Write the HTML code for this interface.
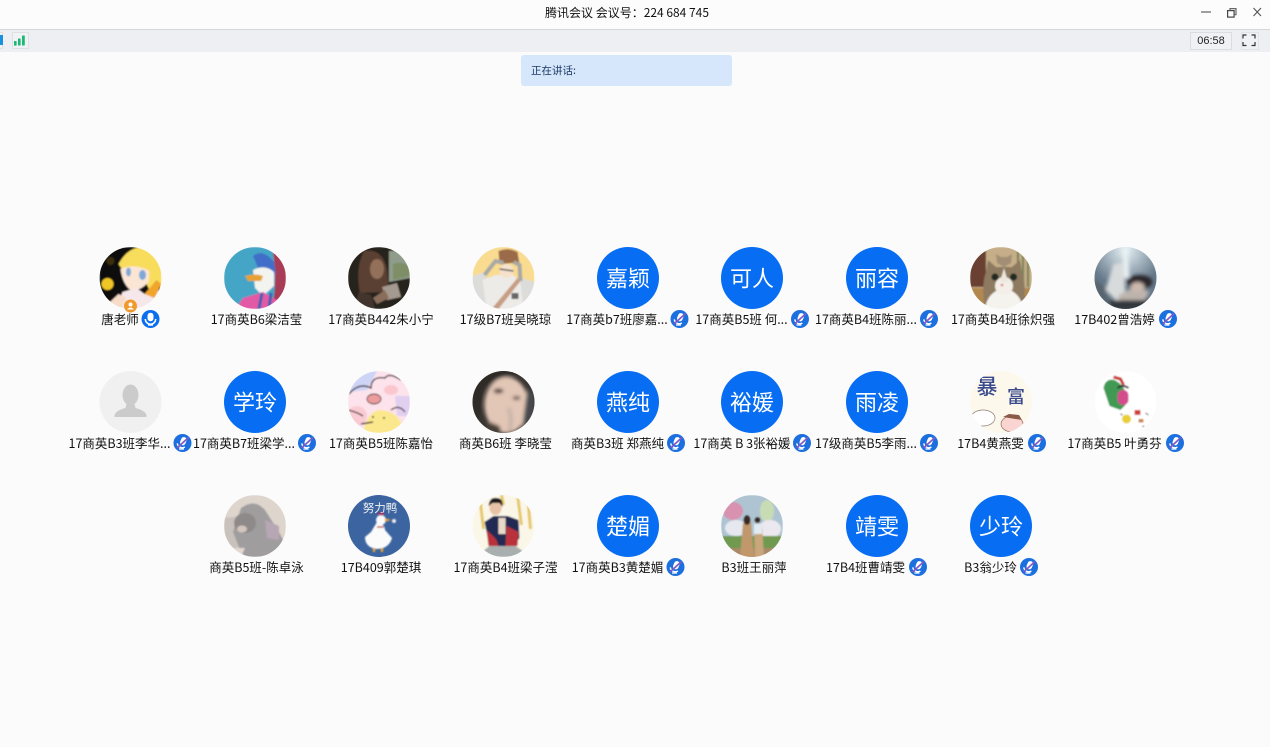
<!DOCTYPE html>
<html><head><meta charset="utf-8"><title>腾讯会议</title>
<style>
html,body{margin:0;padding:0;width:1270px;height:747px;overflow:hidden;background:#fbfbfb}
body{position:relative;font-family:"Liberation Sans","Noto Sans CJK SC",sans-serif;color:#111}
.a{position:absolute}
.n{position:absolute;white-space:nowrap;font-size:12.5px;line-height:16px;transform:translateX(-50%);color:#111;font-family:"Noto Sans CJK SC","Liberation Sans",sans-serif}
.r1{top:311px}.r2{top:435px}.r3{top:559px}
svg{position:absolute;left:0;top:0}
</style></head><body>
<div class="a" style="left:0;top:0;width:1270px;height:29px;background:#fcfcfc"></div>
<div class="a" style="left:0;top:29px;width:1270px;height:1px;background:#d6d7db"></div>
<div class="a" style="left:0;top:30px;width:1270px;height:22px;background:#eeeff3"></div>
<div class="a" style="left:545px;top:5px;white-space:nowrap;font-size:12px;line-height:16px;color:#111;font-family:'Noto Sans CJK SC','Liberation Sans',sans-serif">腾讯会议 会议号：224 684 745</div>
<div class="a" style="left:521px;top:55px;width:211px;height:31px;background:#d6e6fb;border-radius:3px"></div>
<div class="a" style="left:531px;top:63px;font-size:10.5px;line-height:15px;color:#1c3a66;font-family:'Noto Sans CJK SC',sans-serif">正在讲话:</div>
<div class="a" style="left:1190px;top:32px;width:40px;height:16px;background:#f0f1f4;border:1px solid #dcdde1;text-align:center;font-size:11px;line-height:16px;color:#222">06:58</div>
<div class="a" style="left:1241px;top:32px;width:16px;height:16px;background:#f0f1f4;border:1px solid #e2e3e7"></div>
<div class="a" style="left:12px;top:32px;width:17px;height:17px;background:#f1f2f5;border:1px solid #dfe0e4;box-sizing:border-box"></div>
<div class="a" style="left:-3px;top:32px;width:6px;height:17px;background:#f1f2f5;border:1px solid #dfe0e4;box-sizing:border-box"></div>

<svg width="1270" height="747" viewBox="0 0 1270 747" xmlns="http://www.w3.org/2000/svg">
<defs>
<clipPath id="c"><circle r="31"/></clipPath>
<filter id="b" x="-10%" y="-10%" width="120%" height="120%"><feGaussianBlur stdDeviation="0.8"/></filter>
<filter id="b2" x="-20%" y="-20%" width="140%" height="140%"><feGaussianBlur stdDeviation="1.8"/></filter>
<radialGradient id="g1" cx="50%" cy="5%" r="60%"><stop offset="0" stop-color="#e6f2f6"/><stop offset="1" stop-color="#66798a"/></radialGradient>
<symbol id="mic" viewBox="-9 -9 18 18" overflow="visible">
<circle r="9" fill="#0b6ef0"/>
<rect x="-3" y="-6.200" width="6" height="8.500" rx="3" fill="#fff"/>
<path d="M-5.200 0a5.200 5.200 0 0 0 10.400 0" fill="none" stroke="#fff" stroke-width="1.500"/>
<path d="M-2.500 6h5" stroke="#fff" stroke-width="1.400"/>
</symbol>
<symbol id="mut" viewBox="-9 -9 18 18" overflow="visible">
<circle r="9" fill="#1b6fdf"/>
<rect x="-2.700" y="-6.200" width="5.600" height="8.500" rx="2.800" fill="#fff" transform="rotate(22)"/>
<path d="M-5.200 .4a5 5 0 0 0 7.600 3.600" fill="none" stroke="#fff" stroke-width="1.400"/>
<path d="M-3.500 6h5" stroke="#fff" stroke-width="1.300"/>
<path d="M-5.500 5L6-5.500" stroke="#8258c4" stroke-width="1.700"/>
</symbol>
</defs>

<rect x="0" y="35" width="3" height="10" fill="#1b8fe0"/>
<g fill="#1db876"><rect x="14" y="41" width="2.600" height="4.600" rx=".5"/><rect x="18" y="38.500" width="2.600" height="7" rx=".5"/><rect x="22" y="35.500" width="2.800" height="10" rx=".5"/></g>
<g fill="none" stroke="#555" stroke-width="1.200">
<path d="M1201 12h10" stroke="#777" stroke-width="1.400"/>
<rect x="1227.600" y="10.600" width="6.500" height="6.500" stroke="#444"/>
<path d="M1230 10.500V8.600h6v6h-2" stroke="#666"/>
<path d="M1253.500 8l7.500 8M1261 8l-7.500 8" stroke="#555" stroke-width="1.100"/>
<path d="M1243 38.500V35h3.500M1251.500 35h3.500v3.500M1243 42v3.500h3.500M1255 42v3.500h-3.500" stroke="#333"/>
</g>

<!-- Row 1 -->
<g transform="translate(130.500 278)" clip-path="url(#c)"><g filter="url(#b)">
<rect x="-31" y="-31" width="62" height="62" fill="#0b0908"/>
<circle cx="-23" cy="6" r="6" fill="#f0c625"/><circle cx="-20" cy="-17" r="4" fill="#3a2d0a"/>
<path d="M-12-14Q-2-32 14-31 31-26 31-4V8L20 14 10-6-8-8Z" fill="#f8dd5c"/>
<path d="M-10-9Q4-15 19-7L18 4Q9 14 0 12-8 6-10-9Z" fill="#fbe6d6"/>
<ellipse cx="12" cy="-3" rx="3.500" ry="5" fill="#7fa8d6"/><ellipse cx="-2" cy="-6" rx="2.500" ry="4.500" fill="#7fa8d6"/>
<path d="M-14 31L-8 14 6 10 14 16 28 10 31 31Z" fill="#f6e7ea"/>
<path d="M14 16L26 2 31 6 24 20Z" fill="#f0a52c"/>
<path d="M-28 31L-12 16-4 20-10 31Z" fill="#f7dcc8"/>
</g></g>
<g transform="translate(255 278)" clip-path="url(#c)"><g filter="url(#b)">
<rect x="-31" y="-31" width="62" height="62" fill="#44a5c6"/>
<path d="M17-31H31V31H17Q23 0 17-31Z" fill="#a83a55"/>
<path d="M-2-22Q8-30 19-16L21-4 4-8Z" fill="#3f6ec8"/>
<path d="M-2-8Q10-14 19-6L19 8 8 18 0 10Z" fill="#f3f3f0"/>
<path d="M-10-2Q0-5 8-2L6 3-7 3Z" fill="#e7a030"/>
<path d="M-20 31L-12 20 8 14 22 22V31Z" fill="#e25aa6"/>
<path d="M4 31L7 15M14 31L16 15" stroke="#3a5fb4" stroke-width="3"/>
</g></g>
<g transform="translate(379 278)" clip-path="url(#c)"><g filter="url(#b)">
<rect x="-31" y="-31" width="62" height="62" fill="#27201d"/>
<path d="M10-27H31V0L10 4Z" fill="#8f9c8b"/>
<path d="M14-14Q24-18 31-10V-2L14 2Z" fill="#7e8f68"/>
<path d="M-15-27Q4-30 8-8L10 14-19 15Q-24-10-15-27Z" fill="#5a4130"/>
<ellipse cx="-2" cy="-9" rx="7" ry="10" fill="#93705a"/>
<path d="M3 9L18 5 22 19 8 22Z" fill="#a59a90"/>
<path d="M-6 20L6 12 10 20-2 26Z" fill="#8a6e5c"/>
<path d="M-26 31L-20 14-8 17-4 31Z" fill="#43352d"/>
</g></g>
<g transform="translate(503.500 278)" clip-path="url(#c)"><g filter="url(#b)">
<rect x="-31" y="-31" width="62" height="62" fill="#f9dc90"/>
<path d="M-31-2L-18-6-14 20 18 0 31 4V31H-31Z" fill="#dcdcda"/>
<path d="M-21 2L-8-3H10L17 5 20 31H-17Z" fill="#ecebe8"/>
<path d="M-5-27Q5-31 14-26L16-14 9-15-4-14Z" fill="#9b6b48"/>
<ellipse cx="3" cy="-7" rx="7" ry="7" fill="#f6e2cc"/>
<path d="M-19-3L-8-17 0-15M17 3L16-13 10-16" stroke="#a8a8a6" stroke-width="4" fill="none"/>
<path d="M-12 31L14 0 17 3-5 31Z" fill="#c79e84"/>
<path d="M-4-9L10-7" stroke="#555" stroke-width="1.500"/>
<rect x="8" y="15" width="7" height="6" fill="#666"/>
</g></g>
<g transform="translate(628 278)"><circle r="31" fill="#076df2"/><text y="8.500" text-anchor="middle" font-family="Noto Sans CJK SC" font-size="22" fill="#fff">嘉颖</text></g>
<g transform="translate(752 278)"><circle r="31" fill="#076df2"/><text y="8.500" text-anchor="middle" font-family="Noto Sans CJK SC" font-size="22" fill="#fff">可人</text></g>
<g transform="translate(877 278)"><circle r="31" fill="#076df2"/><text y="8.500" text-anchor="middle" font-family="Noto Sans CJK SC" font-size="22" fill="#fff">丽容</text></g>
<g transform="translate(1001 278)" clip-path="url(#c)"><g filter="url(#b)">
<rect x="-31" y="-31" width="62" height="62" fill="#c5ae88"/>
<rect x="-31" y="-31" width="16" height="40" fill="#6b3f30"/>
<path d="M17-31v40M22-31v40M27-31v40" stroke="#7c8358" stroke-width="2.200"/>
<rect x="-31" y="10" width="62" height="21" fill="#b38850"/>
<path d="M-16 31Q-20 8-15-6L-13-18-5-11H11L19-18 21-6Q26 8 22 31Z" fill="#8d7a60"/>
<path d="M-16 31Q-14 14 3 10 20 14 22 31Z" fill="#f5f3ee"/>
<path d="M-4-15L-5-24 0-21H6L11-24 10-15 3-11Z" fill="#a28e74"/>
<ellipse cx="3" cy="8" rx="9" ry="9" fill="#f3efe8"/>
<path d="M3-10L-1 4H7Z" fill="#ece7dd"/>
<circle cx="-6" cy="-1" r="3.600" fill="#222a22"/><circle cx="12.500" cy="-1" r="3.600" fill="#222a22"/>
<path d="M-1 6h4L1 9Z" fill="#e3838a"/>
</g></g>
<g transform="translate(1125.500 278)" clip-path="url(#c)">
<rect x="-31" y="-31" width="62" height="62" fill="url(#g1)"/>
<g filter="url(#b2)">
<path d="M-3-31h5L4 0H-2Z" fill="#e6f0f3"/>
<path d="M-20 12L-12-14-2-16 0 16-8 24Z" fill="#d8dbdc"/>
<path d="M-8 18L10 8 24 14 18 24-2 26Z" fill="#bdb4ad"/>
<ellipse cx="14" cy="4" rx="13" ry="7" fill="#2a282c"/>
<ellipse cx="12" cy="9" rx="7" ry="5" fill="#cbb8ad"/>
<rect x="-31" y="22" width="62" height="10" fill="#30373e"/>
<path d="M-31 0L-20 10-14 31H-31Z" fill="#59656f"/>
</g></g>

<!-- Row 2 -->
<g transform="translate(130.500 402)" clip-path="url(#c)">
<rect x="-31" y="-31" width="62" height="62" fill="#f0f0f0"/>
<ellipse cx="0" cy="-7" rx="8" ry="10.500" fill="#cbcbcb"/>
<path d="M-16 14Q-16 9-5 6L-4 2H4L5 6Q16 9 16 14V15H-16Z" fill="#cbcbcb"/>
</g>
<g transform="translate(255 402)"><circle r="31" fill="#076df2"/><text y="8.500" text-anchor="middle" font-family="Noto Sans CJK SC" font-size="22" fill="#fff">学玲</text></g>
<g transform="translate(379 402)" clip-path="url(#c)"><g filter="url(#b)">
<rect x="-31" y="-31" width="62" height="62" fill="#fde3ec"/>
<path d="M-31-31H-2L-12-12-31-10Z" fill="#cdd4f6"/>
<path d="M16-6H31V14H18Z" fill="#e1cff0"/>
<ellipse cx="-22" cy="14" rx="10" ry="10" fill="#fbcbd4"/>
<path d="M-16 31Q-12 9 1 8 22 9 25 31Z" fill="#fce88c"/>
<path d="M-30-8Q-20-20-8-14-8-26 6-24 10-30 22-22M-31 8Q-22 10-16 14M-18 22L-6 20M12 8Q20 2 26 10" fill="none" stroke="#4b3b3f" stroke-width="1.400"/>
<ellipse cx="-5" cy="-3" rx="7" ry="5" fill="#ec9c9c" stroke="#4b3b3f" stroke-width=".9"/>
<circle cx="-6" cy="15" r="1" fill="#333"/><circle cx="5" cy="16" r="1" fill="#333"/>
<ellipse cx="12" cy="-12" rx="7" ry="5" fill="#fbc6ce"/>
</g></g>
<g transform="translate(503.500 402)" clip-path="url(#c)">
<rect x="-31" y="-31" width="62" height="62" fill="#3a3532"/>
<g filter="url(#b2)">
<ellipse cx="3" cy="3" rx="22" ry="28" fill="#e2c6b6"/>
<path d="M-31-31H20L10-26Q-10-26-20-10L-24 16-31 20Z" fill="#2e2a27"/>
<path d="M24-14L31-8V31H18Z" fill="#46494e"/>
<ellipse cx="-5" cy="-11" rx="5" ry="2.500" fill="#4f3f38"/><ellipse cx="13" cy="-4" rx="4" ry="2" fill="#6a554c"/>
<path d="M5 6Q9 16 6 30" stroke="#c8b4a8" stroke-width="4" fill="none"/>
<path d="M-22 31L-14 20-4 24-2 31Z" fill="#4a3f39"/>
</g></g>
<g transform="translate(628 402)"><circle r="31" fill="#076df2"/><text y="8.500" text-anchor="middle" font-family="Noto Sans CJK SC" font-size="22" fill="#fff">燕纯</text></g>
<g transform="translate(752 402)"><circle r="31" fill="#076df2"/><text y="8.500" text-anchor="middle" font-family="Noto Sans CJK SC" font-size="22" fill="#fff">裕媛</text></g>
<g transform="translate(877 402)"><circle r="31" fill="#076df2"/><text y="8.500" text-anchor="middle" font-family="Noto Sans CJK SC" font-size="22" fill="#fff">雨凌</text></g>
<g transform="translate(1001 402)" clip-path="url(#c)">
<rect x="-31" y="-31" width="62" height="62" fill="#fdf8ec"/>
<text x="-14" y="-8" text-anchor="middle" font-family="Noto Sans CJK SC" font-weight="500" font-size="21" fill="#3a4a8c">暴</text>
<text x="15" y="1" text-anchor="middle" font-family="Noto Sans CJK SC" font-weight="500" font-size="18" fill="#3a4a8c">富</text>
<ellipse cx="-18" cy="16" rx="12" ry="8" fill="#fff" stroke="#8a7a70" stroke-width=".7"/>
<ellipse cx="11" cy="22" rx="11" ry="8" fill="#f9d4d0" stroke="#7c5a50" stroke-width=".6"/>
<path d="M2 15l6-3 10 1 3 5" fill="#8a5a48"/>
</g>
<g transform="translate(1125.500 402)" clip-path="url(#c)"><g filter="url(#b)">
<rect x="-31" y="-31" width="62" height="62" fill="#fff"/>
<path d="M-22-14Q-20-24-11-22-3-18 0-10L0 3-5 8-16 4Z" fill="#3f9a52"/>
<path d="M-12-25l7 2 3 6" stroke="#c9302c" stroke-width="3" fill="none"/>
<rect x="-8" y="-12" width="11" height="15" rx="5" fill="#d34d8c"/>
<path d="M-8-14q5-4 11 0" stroke="#333" stroke-width="2" fill="none"/>
<circle cx="1" cy="17" r="4.500" fill="#e9cf32"/>
<rect x="9" y="8" width="6" height="5" fill="#d03c34"/>
<rect x="13" y="17" width="5" height="3.500" fill="#c98442"/>
<path d="M-5 12l2 1M20 11l3 2M17 24l2 1" stroke="#333" stroke-width="1"/>
</g></g>

<!-- Row 3 -->
<g transform="translate(255 526)" clip-path="url(#c)"><g filter="url(#b)">
<rect x="-31" y="-31" width="62" height="62" fill="#ded5cd"/>
<path d="M-31-8L-14-10-8 22-31 22Z" fill="#c9c1bb"/>
<path d="M-14-18Q0-28 10-16L24 6 31 20 24 31H-12L-22 6Z" fill="#a09d9e"/>
<path d="M10-6L24 0 24 14 12 12Z" fill="#b7a6b4"/>
<ellipse cx="-10" cy="-3" rx="11" ry="10" fill="#8e8a8a"/>
<ellipse cx="-13" cy="3" rx="5" ry="3.500" fill="#d4c6be"/>
<path d="M-31 22H-10L-14 31H-31Z" fill="#e3d8d0"/>
</g></g>
<g transform="translate(379 526)" clip-path="url(#c)">
<rect x="-31" y="-31" width="62" height="62" fill="#3b64a0"/>
<text x="1" y="-14" text-anchor="middle" font-family="Noto Sans CJK SC" font-size="11.500" fill="#f3f3f3">努力鸭</text>
<g filter="url(#b)" transform="translate(0 2)">
<circle cx="2" cy="-8" r="5" fill="#fbfbfb"/>
<path d="M-2-6Q6-4 6 2L13 10Q10 21-3 21-14 19-14 9L-8 4Z" fill="#fbfbfb"/>
<path d="M6-10l6 2-6 2Z" fill="#e9a03a"/>
<path d="M-2-1h7" stroke="#c43a3a" stroke-width="1.400"/>
<path d="M-5 20v4M3 20v4" stroke="#e5a52e" stroke-width="2.500"/>
<path d="M-1-15l3 2 3-2" stroke="#d14" stroke-width="1.500" fill="none"/>
<circle cx="15" cy="-7" r="2" fill="#eee"/>
</g></g>
<g transform="translate(503.500 526)" clip-path="url(#c)"><g filter="url(#b)">
<rect x="-31" y="-31" width="62" height="62" fill="#fbf7e8"/>
<path d="M-24-31l4 34M-2-31l2 10M14-31l4 30M24-31l3 34" stroke="#e5c767" stroke-width="3"/>
<path d="M-19-4L-10-10H4L15-6 16 12 10 20H-14Z" fill="#232b52"/>
<path d="M-17 4Q-10 10-7 14L-5 20H-15ZM3 0L15 6 14 20 2 20Z" fill="#b9303a"/>
<rect x="-5" y="-8" width="7" height="16" fill="#e8d8c8"/>
<ellipse cx="-8" cy="-18" rx="6" ry="7" fill="#e8c2a6"/>
<path d="M-15-20Q-14-29-7-28 0-28-1-19L-4-23H-11Z" fill="#1a1a1a"/>
<path d="M-28 31L-14 20H12L28 31Z" fill="#a9aeae"/>
</g></g>
<g transform="translate(628 526)"><circle r="31" fill="#076df2"/><text y="8.500" text-anchor="middle" font-family="Noto Sans CJK SC" font-size="22" fill="#fff">楚媚</text></g>
<g transform="translate(752 526)" clip-path="url(#c)"><g filter="url(#b)">
<rect x="-31" y="-31" width="62" height="62" fill="#aec4d2"/>
<ellipse cx="-19" cy="-15" rx="10" ry="9" fill="#d891ae"/>
<ellipse cx="15" cy="-15" rx="7" ry="11" fill="#c8dcb4"/>
<ellipse cx="-16" cy="2" rx="11" ry="8" fill="#e6e8f0"/>
<ellipse cx="18" cy="3" rx="11" ry="9" fill="#ebe8f0"/>
<rect x="-31" y="10" width="62" height="12" fill="#6f9a50"/>
<rect x="-31" y="22" width="62" height="10" fill="#a98a68"/>
<path d="M-9-3L-1-4 2 31H-12Z" fill="#c0986c"/>
<ellipse cx="-5" cy="-6" rx="3.500" ry="5" fill="#3a2a22"/>
<path d="M2-2L10-2 12 31H3Z" fill="#c9a67c"/>
<rect x="2" y="-2" width="8" height="10" fill="#e2ebf2"/>
<circle cx="5.500" cy="-6" r="3" fill="#3a2a22"/>
</g></g>
<g transform="translate(877 526)"><circle r="31" fill="#076df2"/><text y="8.500" text-anchor="middle" font-family="Noto Sans CJK SC" font-size="22" fill="#fff">靖雯</text></g>
<g transform="translate(1001 526)"><circle r="31" fill="#076df2"/><text y="8.500" text-anchor="middle" font-family="Noto Sans CJK SC" font-size="22" fill="#fff">少玲</text></g>

<circle cx="130.500" cy="306" r="6.500" fill="#ef9a2d"/>
<circle cx="130.500" cy="304.500" r="2" fill="#fff"/><path d="M127 309.500q3.500-4 7 0Z" fill="#fff"/>

<use href="#mic" x="141.500" y="310" width="18" height="18"/>
<use href="#mut" x="670.500" y="310" width="18" height="18"/>
<use href="#mut" x="791" y="310" width="18" height="18"/>
<use href="#mut" x="920" y="310" width="18" height="18"/>
<use href="#mut" x="1159" y="310" width="18" height="18"/>
<use href="#mut" x="173.500" y="434" width="18" height="18"/>
<use href="#mut" x="298" y="434" width="18" height="18"/>
<use href="#mut" x="667" y="434" width="18" height="18"/>
<use href="#mut" x="793" y="434" width="18" height="18"/>
<use href="#mut" x="920" y="434" width="18" height="18"/>
<use href="#mut" x="1028" y="434" width="18" height="18"/>
<use href="#mut" x="1166" y="434" width="18" height="18"/>
<use href="#mut" x="666.500" y="558" width="18" height="18"/>
<use href="#mut" x="909" y="558" width="18" height="18"/>
<use href="#mut" x="1020" y="558" width="18" height="18"/>
</svg>

<div class="n r1" style="left:120px">唐老师</div>
<div class="n r1" style="left:256.500px">17商英B6梁洁莹</div>
<div class="n r1" style="left:381px">17商英B442朱小宁</div>
<div class="n r1" style="left:505.500px">17级B7班吴晓琼</div>
<div class="n r1" style="left:617px">17商英b7班廖嘉...</div>
<div class="n r1" style="left:741.500px">17商英B5班 何...</div>
<div class="n r1" style="left:866px">17商英B4班陈丽...</div>
<div class="n r1" style="left:1003px">17商英B4班徐炽强</div>
<div class="n r1" style="left:1114.500px">17B402曾浩婷</div>
<div class="n r2" style="left:119.500px">17商英B3班李华...</div>
<div class="n r2" style="left:244px">17商英B7班梁学...</div>
<div class="n r2" style="left:381px">17商英B5班陈嘉怡</div>
<div class="n r2" style="left:505.500px">商英B6班 李晓莹</div>
<div class="n r2" style="left:617.500px">商英B3班 郑燕纯</div>
<div class="n r2" style="left:742px">17商英 B 3张裕媛</div>
<div class="n r2" style="left:866px">17级商英B5李雨...</div>
<div class="n r2" style="left:990.500px">17B4黄燕雯</div>
<div class="n r2" style="left:1114.500px">17商英B5 叶勇芬</div>
<div class="n r3" style="left:256.500px">商英B5班-陈卓泳</div>
<div class="n r3" style="left:381px">17B409郭楚琪</div>
<div class="n r3" style="left:505.500px">17商英B4班梁子滢</div>
<div class="n r3" style="left:617.500px">17商英B3黄楚媚</div>
<div class="n r3" style="left:754px">B3班王丽萍</div>
<div class="n r3" style="left:865.500px">17B4班曹靖雯</div>
<div class="n r3" style="left:990.500px">B3翁少玲</div>
</body></html>
